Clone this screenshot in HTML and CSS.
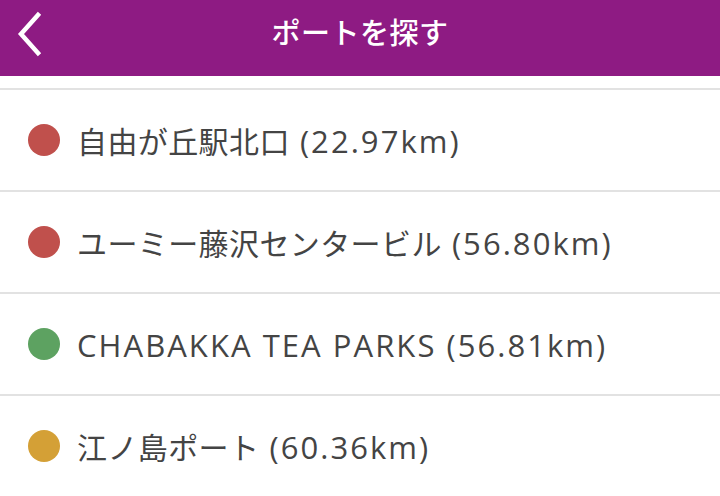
FILE: index.html
```html
<!DOCTYPE html>
<html lang="ja">
<head>
<meta charset="utf-8">
<link rel="stylesheet" href="styles.css">
</head>
<body>
<header class="bar">
  <svg class="back" width="30" height="46" viewBox="0 0 30 46"><polyline points="22,4 5,23 22,42" fill="none" stroke="#fff" stroke-width="4.5" stroke-linecap="square"/></svg>
  <h1 class="title">ポートを探す</h1>
</header>
<ul class="list">
  <li class="row"><span class="dot red"></span><span class="name">自由が丘駅北口<span class="en"> (22.97km)</span></span></li>
  <li class="row"><span class="dot red"></span><span class="name">ユーミー藤沢センタービル<span class="en"> (56.80km)</span></span></li>
  <li class="row"><span class="dot green"></span><span class="name"><span class="en">CHABAKKA TEA PARKS (56.81km)</span></span></li>
  <li class="row"><span class="dot gold"></span><span class="name">江ノ島ポート<span class="en"> (60.36km)</span></span></li>
</ul>
</body>
</html>
```
FILE: styles.css
```css
html, body { margin: 0; padding: 0; background: #fff; }
body { font-family: "Noto Sans", "Noto Sans CJK JP", sans-serif; width: 720px; height: 496px; overflow: hidden; }
.bar { height: 76px; box-sizing: border-box; padding-bottom: 14px; background: #8e1b83; display: flex; align-items: center; justify-content: center; position: relative; }
.back { position: absolute; left: 16px; top: 11px; }
.title { margin: 0; color: #fff; font-size: 29px; font-weight: 500; font-family: "Noto Sans CJK JP", sans-serif; letter-spacing: 0.5px; }
.list { list-style: none; margin: 12px 0 0; padding: 0; border-top: 2px solid #e2e2e2; }
.row { height: 100px; border-bottom: 2px solid #e2e2e2; display: flex; align-items: center; padding-left: 28px; }
.dot { width: 32px; height: 32px; border-radius: 50%; margin-right: 17px; flex: none; }
.red { background: #c0504c; }
.green { background: #5da261; }
.gold { background: #d4a036; }
.name { font-size: 30px; color: #444; font-family: "Noto Sans CJK JP", sans-serif; font-weight: 400; white-space: nowrap; letter-spacing: 0.4px; }
.en { font-family: "Open Sans", "Noto Sans", sans-serif; font-size: 31px; letter-spacing: 2.05px; }
```
